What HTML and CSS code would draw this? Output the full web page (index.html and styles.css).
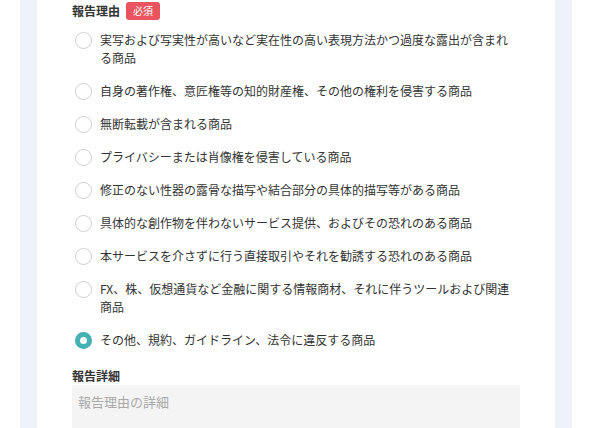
FILE: index.html
```html
<!DOCTYPE html>
<html lang="ja">

<head>
    <meta charset="UTF-8">
    <meta name="viewport" content="width=device-width, initial-scale=1.0">
    <title>報告</title>
    <link rel="stylesheet" href="styles.css">
</head>

<body>
    <div class="page">
        <div class="panel">
            <div class="card">
                <!-- 報告理由 -->
                <div class="field">
                    <div class="field-head">
                        <span class="field-title">報告理由</span>
                        <span class="badge">必須</span>
                    </div>
                    <ul class="options">
                        <li><label class="option"><input type="radio" name="reason"><span class="option-text">実写および写実性が高いなど実在性の高い表現方法かつ過度な露出が含まれる商品</span></label></li>
                        <li><label class="option"><input type="radio" name="reason"><span class="option-text">自身の著作権、意匠権等の知的財産権、その他の権利を侵害する商品</span></label></li>
                        <li><label class="option"><input type="radio" name="reason"><span class="option-text">無断転載が含まれる商品</span></label></li>
                        <li><label class="option"><input type="radio" name="reason"><span class="option-text">プライバシーまたは肖像権を侵害している商品</span></label></li>
                        <li><label class="option"><input type="radio" name="reason"><span class="option-text">修正のない性器の露骨な描写や結合部分の具体的描写等がある商品</span></label></li>
                        <li><label class="option"><input type="radio" name="reason"><span class="option-text">具体的な創作物を伴わないサービス提供、およびその恐れのある商品</span></label></li>
                        <li><label class="option"><input type="radio" name="reason"><span class="option-text">本サービスを介さずに行う直接取引やそれを勧誘する恐れのある商品</span></label></li>
                        <li><label class="option"><input type="radio" name="reason"><span class="option-text">FX、株、仮想通貨など金融に関する情報商材、それに伴うツールおよび関連商品</span></label></li>
                        <li><label class="option"><input type="radio" name="reason" checked><span class="option-text">その他、規約、ガイドライン、法令に違反する商品</span></label></li>
                    </ul>
                </div>

                <!-- 報告詳細 -->
                <div class="field">
                    <div class="field-head">
                        <span class="field-title">報告詳細</span>
                    </div>
                    <textarea class="detail" placeholder="報告理由の詳細"></textarea>
                </div>
            </div>
        </div>
    </div>
</body>

</html>
```

FILE: styles.css
```css
* {
    margin: 0;
    padding: 0;
    box-sizing: border-box;
    list-style: none;
}
body {
    background: #fff;
    color: #333;
    font-family: "Noto Sans CJK JP", "Noto Sans", sans-serif;
    font-size: 12px;
}
.page {
    padding: 0 18px 0 20px;
}
.panel {
    background: #eff3f9;
    padding: 0 17px;
    min-height: 428px;
}
.card {
    background: #fff;
    padding: 2px 35px 0;
    min-height: 428px;
}
.field-head {
    display: flex;
    align-items: center;
    gap: 6px;
    height: 18px;
}
.field-title {
    font-weight: 700;
    font-size: 12px;
    line-height: 18px;
}
.badge {
    background: #e9545e;
    color: #fff;
    font-size: 10px;
    line-height: 18px;
    height: 18px;
    padding: 0 7px;
    border-radius: 3px;
}
.options {
    margin-top: 11px;
    margin-bottom: 18px;
}
.options li {
    margin-bottom: 15px;
}
.options li:last-child {
    margin-bottom: 0;
}
.option {
    display: flex;
    align-items: flex-start;
    gap: 8px;
    padding-left: 3px;
    padding-right: 6px;
    cursor: pointer;
}
.option input {
    appearance: none;
    -webkit-appearance: none;
    flex: none;
    width: 17px;
    height: 17px;
    margin-top: 1px;
    border: 1px solid #cfcfcf;
    border-radius: 50%;
    background: #fff;
}
.option input:checked {
    border: 5px solid #44b1b5;
}
.option-text {
    line-height: 18px;
    font-size: 12px;
}
.detail {
    display: block;
    width: 100%;
    height: 60px;
    border: 0;
    background: #f4f4f4;
    padding: 7px 6px;
    font-family: inherit;
    font-size: 13px;
    line-height: 20px;
    resize: none;
}
.detail::placeholder {
    color: #a9a9a9;
}
```
